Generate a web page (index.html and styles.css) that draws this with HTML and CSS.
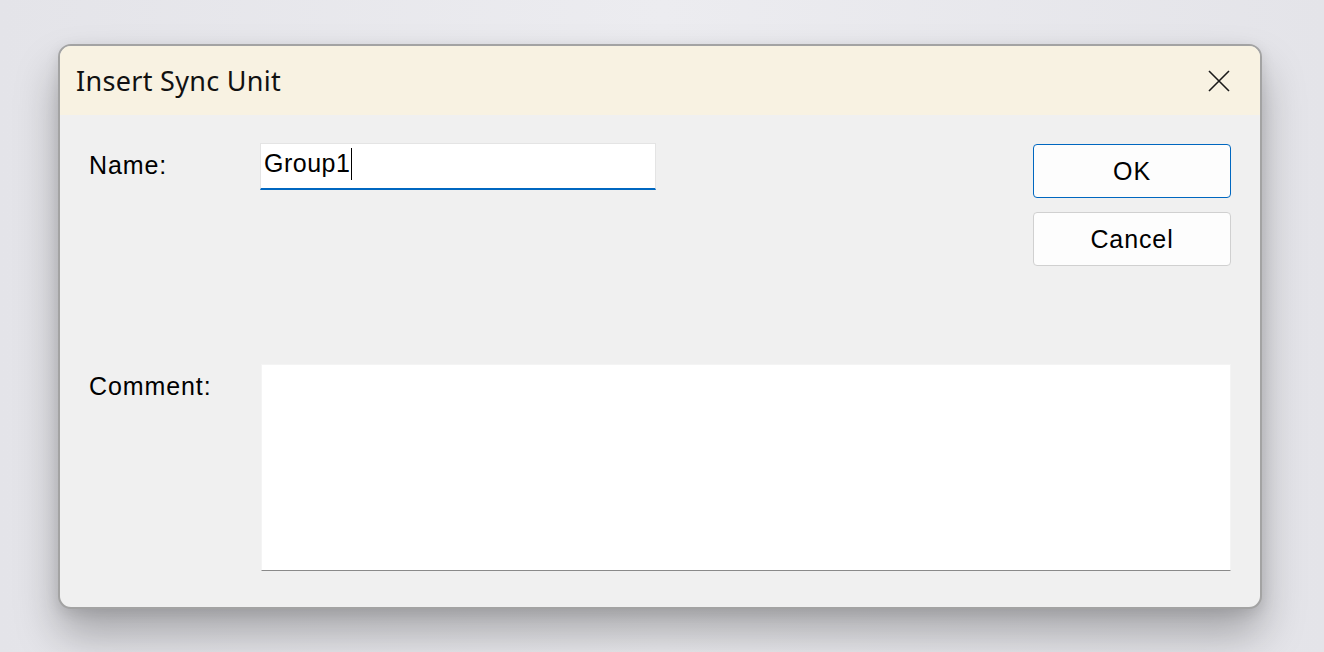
FILE: index.html
```html
<!DOCTYPE html>
<html>
<head>
<meta charset="utf-8">
<link rel="stylesheet" href="styles.css">
</head>
<body>
<div class="dialog">
  <div class="titlebar">
    <span class="title">Insert Sync Unit</span>
    <span class="close"><svg width="22" height="22" viewBox="0 0 22 22"><path d="M1 1L21 21M21 1L1 21" stroke="#1a1a1a" stroke-width="1.6" fill="none"/></svg></span>
  </div>
  <div class="content">
    <div class="label name-label">Name:</div>
    <div class="input"><span class="value">Group1</span><span class="caret"></span></div>
    <div class="buttons">
      <div class="btn primary">OK</div>
      <div class="btn">Cancel</div>
    </div>
    <div class="label comment-label">Comment:</div>
    <div class="textarea"></div>
  </div>
</div>
</body>
</html>
```
FILE: styles.css
```css
html, body {
  margin: 0;
  height: 100%;
}
body {
  background: linear-gradient(90deg, #e4e4e9 0%, #ececf0 50%, #e4e4e9 100%);
  padding: 44px 0 0 58px;
  box-sizing: border-box;
  overflow: hidden;
}
.dialog {
  width: 1204px;
  height: 565px;
  box-sizing: border-box;
  border: 2px solid #a3a3a3;
  border-radius: 13px;
  background: #f0f0f0;
  overflow: hidden;
  box-shadow: 0 26px 44px rgba(0, 0, 0, 0.28), 0 4px 14px rgba(0, 0, 0, 0.1);
  display: flex;
  flex-direction: column;
}
.titlebar {
  height: 69px;
  flex: none;
  background: #f8f2e2;
  display: flex;
  align-items: center;
  justify-content: space-between;
  padding: 0 30px 0 16px;
}
.title {
  font-family: "Noto Sans", "Open Sans", sans-serif;
  font-size: 27px;
  letter-spacing: 0.3px;
  color: #111;
  margin-top: -1px;
}
.close {
  display: flex;
  width: 22px;
  height: 22px;
}
.content {
  padding: 28px 29px 0 29px;
  display: grid;
  grid-template-columns: 171px 396px 1fr 198px;
  grid-template-rows: 221px 207px;
  font-family: "Liberation Sans", Arial, sans-serif;
  font-size: 25px;
  color: #000;
}
.label {
  padding-top: 8px;
  letter-spacing: 0.9px;
}
.input {
  height: 47px;
  box-sizing: border-box;
  background: #fff;
  border: 1px solid #e4e4e4;
  border-bottom: 2px solid #0067c0;
  display: flex;
  align-items: center;
  padding-left: 3px;
  padding-bottom: 5px;
}
.value {
  letter-spacing: 0.5px;
}
.caret {
  display: inline-block;
  width: 1px;
  height: 32px;
  background: #000;
  margin-left: 1px;
}
.buttons {
  grid-column: 4;
  display: flex;
  flex-direction: column;
  gap: 14px;
  padding-top: 1px;
}
.btn {
  height: 54px;
  box-sizing: border-box;
  border: 1px solid #d0d0d0;
  border-radius: 4px;
  background: #fdfdfd;
  display: flex;
  align-items: center;
  justify-content: center;
  letter-spacing: 0.9px;
}
.btn.primary {
  border-color: #0067c0;
}
.textarea {
  grid-column: 2 / 5;
  margin-left: 1px;
  background: #fff;
  border: 1px solid #f4f4f4;
  border-bottom: 1px solid #8a8a8a;
}
```
